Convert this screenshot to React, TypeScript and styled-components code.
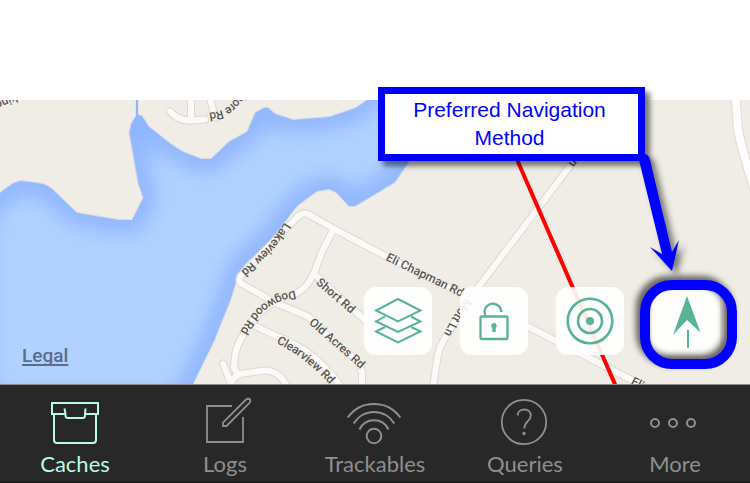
import React from "react";
import styled, { createGlobalStyle } from "styled-components";

const GREEN = "#56b494";
const BLUE = "#0000ff";

const GlobalStyle = createGlobalStyle`
  *, *::before, *::after { box-sizing: border-box; }
  body { margin: 0; background: #ffffff; }
`;

const Page = styled.main`
  display: flex;
  flex-direction: column;
  min-height: 100vh;
  padding-top: 100px;
  overflow: hidden;
  font-family: Lato, "Liberation Sans", sans-serif;
`;

const MapArea = styled.section`
  position: relative;
  display: flex;
  flex: 1;
  align-items: flex-end;
  justify-content: space-between;
  min-height: 285px;
  padding: 0 30px 29px 22px;
  border-bottom: 1px solid #8f8d89;
`;

const MapDrawing = styled.svg`
  position: absolute;
  inset: 0;
  width: 100%;
  height: 100%;
`;

const RoadLabel = styled.text`
  font-family: Roboto, sans-serif;
  font-size: 12px;
  font-weight: 500;
  fill: #5a5752;
  stroke: #f7f5f0;
  stroke-width: 1px;
  paint-order: stroke;
`;

const LegalLink = styled.a`
  position: relative;
  margin-bottom: -13px;
  color: #5d6d88;
  font-family: Roboto, sans-serif;
  font-size: 19px;
  font-weight: 500;
  line-height: 24px;
  text-decoration: underline;
  text-decoration-thickness: 2px;
  text-underline-offset: 2px;
  text-decoration-skip-ink: none;
`;

const MapTools = styled.div`
  position: relative;
  display: flex;
  gap: 28px;
`;

const ToolButton = styled.button`
  position: relative;
  width: 68px;
  height: 68px;
  padding: 0;
  border: 0;
  border-radius: 12px;
  background: rgba(255, 255, 255, 0.91);
  color: ${GREEN};
  cursor: pointer;

  svg { display: block; }
`;

const Highlight = styled.span`
  position: absolute;
  inset: -7px -17px -14px -12px;
  border: 10px solid ${BLUE};
  border-radius: 32px;
  filter: drop-shadow(-4px -4px 3px rgba(0, 0, 0, 0.6));
  pointer-events: none;
`;

const Callout = styled.p`
  position: absolute;
  top: -13px;
  right: 105px;
  width: 267px;
  margin: 0;
  padding: 2px 8px 2px 4px;
  border: 7px solid ${BLUE};
  background: #ffffff;
  box-shadow: 5px 5px 5px rgba(0, 0, 0, 0.5);
  color: ${BLUE};
  font-family: "Liberation Sans", Arial, sans-serif;
  font-size: 21px;
  line-height: 28px;
  text-align: center;
`;

const CalloutArrow = styled.svg`
  position: absolute;
  top: 50px;
  right: 60px;
  filter: drop-shadow(5px 4px 3px rgba(0, 0, 0, 0.5));
  pointer-events: none;
`;

const TabBar = styled.nav`
  display: grid;
  grid-template-columns: repeat(5, 1fr);
  height: 98px;
  background: #282828;
  border-bottom: 1px solid #111111;
`;

const Tab = styled.button<{ $active?: boolean }>`
  display: flex;
  flex-direction: column;
  align-items: center;
  gap: 3px;
  padding: 12px 0 0;
  border: 0;
  background: transparent;
  color: ${({ $active }) => ($active ? "#b9fbe3" : "#8f8f8f")};
  font-family: inherit;
  font-size: 22px;
  line-height: 28px;
  cursor: pointer;
`;

const WATER =
  "M-20 210 L0 193 L8 187 Q14 182 21 181 L43 184 Q48 186 52 189 L77 213 L118 220 L132 220 L143 198 L138 184 L129 133 L131 124 L136 116 L136 80 L138 80 L138 115 L142 116 L149 127 L172 145 L183 152 L201 159 L211 159 L229 142 L247 132 L255 113 L264 108 L268 108 L275 114 L293 120 L330 117 L356 108 L367 100 L380 80 L450 80 L410 161 L395 183 L355 207 L349 207 L336 193 L329 190 L317 192 L298 206 L293 212 L272 240 L245 265 L237 280 L231 300 L220 327 L215 340 L193 385 L180 410 L-20 410 Z";

const ROADS = [
  "M170 112 Q178 121 190 121 L205 120",
  "M191 90 L191 121",
  "M209 90 L211 103 L215 118",
  "M333 231 L322 252 L314 274 Q306 290 296 294 L280 299 Q260 310 252 322 Q237 342 235 356 L234 368 L238 376",
  "M314 274 L330 289 L360 316 L374 330",
  "M241 284 L275 303 L308 317 L340 348 Q361 360 362 374 L362 395",
  "M252 325 L275 336 Q315 350 340 386",
  "M223 364 L231 384 Q234 375 243 374 L265 371 Q275 371 282 379 L290 390",
  "M432 395 L437 361 Q438 348 449 332 L463 308 L500 259 L590 140",
  "M241 284 Q238 281 241 276 L294 221 Q302 211 309 215 L335 230 L390 259 L465 296 L528 327 L557 342 L650 390",
];

type LabelSpec = { id: string; d: string; text: string };

const LABELS: LabelSpec[] = [
  { id: "rocking", d: "M36 90 L-20 113", text: "Rocking" },
  { id: "shore", d: "M248 91 L234 107 Q226 117 200 118", text: "Shore Rd" },
  { id: "lakeview", d: "M288 225 L272 248 L234 284", text: "Lakeview Rd" },
  { id: "dogwood", d: "M296 295 Q267 300 253 320 Q243 332 238 348", text: "Dogwood Rd" },
  { id: "short", d: "M318 281 L338 298 L368 324", text: "Short Rd" },
  { id: "oldacres", d: "M311 321 L340 346 L376 378", text: "Old Acres Rd" },
  { id: "clearview", d: "M278 340 Q308 354 338 388", text: "Clearview Rd" },
  { id: "eli", d: "M387 257 L480 302", text: "Eli Chapman Rd" },
  { id: "mott", d: "M469 301 L454 323 L440 352", text: "Mott Ln" },
  { id: "mott-north", d: "M597 134 L560 181", text: "Mott Ln" },
  { id: "eli-east", d: "M632 381 L720 424", text: "Eli Chapman Rd" },
];

function StreetMap() {
  return (
    <MapDrawing viewBox="0 100 750 285" preserveAspectRatio="xMaxYMid slice" role="img" aria-label="Street map">
      <defs>
        <clipPath id="water-clip"><path d={WATER} /></clipPath>
        <filter id="shore-blur" x="-10%" y="-10%" width="120%" height="120%">
          <feGaussianBlur stdDeviation="11" />
        </filter>
        {LABELS.map(({ id, d }) => <path key={id} id={id} d={d} />)}
      </defs>
      <rect x="-1000" y="0" width="2750" height="600" fill="#efede5" />
      <path d={WATER} fill="#b2d1ff" />
      <g clipPath="url(#water-clip)">
        <path d={WATER} fill="none" stroke="#8ab2ff" strokeWidth="24" filter="url(#shore-blur)" />
      </g>
      <path d={WATER} fill="none" stroke="#d3dbe3" strokeWidth="1" />
      <path d="M137 95 L137 116" stroke="#8db5fc" strokeWidth="2" />
      <g fill="none" strokeLinecap="round" strokeLinejoin="round">
        {ROADS.map((d) => <path key={d} d={d} stroke="#dedad1" strokeWidth="8" />)}
        {ROADS.map((d) => <path key={d} d={d} stroke="#fbfaf8" strokeWidth="6" />)}
        <path d="M735 90 L738 130 Q743 155 754 188" stroke="#dedad1" strokeWidth="10" />
        <path d="M735 90 L738 130 Q743 155 754 188" stroke="#ffffff" strokeWidth="8" />
      </g>
      {LABELS.map(({ id, text }) => (
        <RoadLabel key={id} dy="4"><textPath href={`#${id}`}>{text}</textPath></RoadLabel>
      ))}
      <path d="M510 144 L619 394" stroke="#ff0000" strokeWidth="4" />
    </MapDrawing>
  );
}

const toolSvg = { width: 68, height: 68, viewBox: "0 0 68 68", fill: "none", stroke: "currentColor", strokeWidth: 2, "aria-hidden": true } as const;

function LayersIcon() {
  return (
    <svg {...toolSvg}>
      <path d="M34 12 L56.5 23.5 L34 34.5 L12 23.5 Z" />
      <path d="M21 29.5 L12 34.5 L34 45 L56.5 34.5 L47 29.5" />
      <path d="M21 40 L12 44.5 L34 55.5 L56.5 44.5 L47 40" />
    </svg>
  );
}

function UnlockIcon() {
  return (
    <svg {...toolSvg} strokeWidth={2.3}>
      <rect x="20.5" y="29.5" width="27" height="22.5" rx="1" />
      <path d="M25.5 29.5 Q24.5 26 24.5 23.5 A8.6 8.6 0 0 1 41.5 25" />
      <path d="M34 36 a2.8 2.8 0 0 1 1.7 5 V45 h-3.4 V41 A2.8 2.8 0 0 1 34 36 Z" fill="currentColor" stroke="none" />
    </svg>
  );
}

function TargetIcon() {
  return (
    <svg {...toolSvg} strokeWidth={2.6}>
      <circle cx="34" cy="34" r="22.3" />
      <circle cx="34" cy="34" r="12" />
      <circle cx="34" cy="34" r="4" fill="currentColor" stroke="none" />
    </svg>
  );
}

function NavigateIcon() {
  return (
    <svg {...toolSvg}>
      <path d="M35 9 L48.5 45.5 L35 33 L21 48 Z" fill="currentColor" stroke="none" />
      <path d="M36 43 V61" />
    </svg>
  );
}

const tabSvg = { width: 60, height: 50, viewBox: "0 0 60 50", fill: "none", stroke: "currentColor", strokeWidth: 2, "aria-hidden": true } as const;

function BoxIcon() {
  return (
    <svg {...tabSvg}>
      <path d="M20.5 17 H7 V6 H53 V17 H40" />
      <path d="M9 17 V43 Q9 46 12 46 H48 Q51 46 51 43 V17" />
      <path d="M19.5 11.5 L20.5 17 V18.5 Q20.5 21 23 21 H37.5 Q40 21 40 18.5 V17 L40.5 11.5" />
    </svg>
  );
}

function PencilIcon() {
  return (
    <svg {...tabSvg} strokeWidth={1.8}>
      <path d="M37 9 H12 V45 H48 V20" />
      <path d="M28 29 L28 25.5 L51 2.5 Q53.5 1 55 2.5 Q56 4 54.5 6 L31.5 29 Z" />
    </svg>
  );
}

function SignalIcon() {
  return (
    <svg {...tabSvg}>
      <circle cx="29" cy="39" r="7.3" />
      <path d="M14.5 32.5 A16 16 0 0 1 43.5 32.5" />
      <path d="M8.7 26.5 A23.6 23.6 0 0 1 49.3 26.5" />
      <path d="M2.7 20.5 A32.2 32.2 0 0 1 55.3 20.5" />
    </svg>
  );
}

function QuestionIcon() {
  return (
    <svg {...tabSvg} strokeWidth={1.8}>
      <circle cx="29" cy="25" r="22.2" />
      <path d="M22.7 18.5 C22.7 10.5 35.8 10.5 35.8 18.5 C35.8 24 29.3 24.5 29.3 31.5" />
      <circle cx="29" cy="36.5" r="1.7" fill="currentColor" stroke="none" />
    </svg>
  );
}

function MoreIcon() {
  return (
    <svg {...tabSvg}>
      <circle cx="10" cy="26" r="4" />
      <circle cx="28" cy="26" r="4" />
      <circle cx="46" cy="26" r="4" />
    </svg>
  );
}

const TABS = [
  { label: "Caches", Icon: BoxIcon, active: true },
  { label: "Logs", Icon: PencilIcon },
  { label: "Trackables", Icon: SignalIcon },
  { label: "Queries", Icon: QuestionIcon },
  { label: "More", Icon: MoreIcon },
];

export default function App() {
  return (
    <>
      <GlobalStyle />
      <Page>
        <MapArea>
          <StreetMap />
          <LegalLink href="#legal">Legal</LegalLink>
          <MapTools>
            <ToolButton type="button" aria-label="Map layers"><LayersIcon /></ToolButton>
            <ToolButton type="button" aria-label="Unlock map"><UnlockIcon /></ToolButton>
            <ToolButton type="button" aria-label="Center map"><TargetIcon /></ToolButton>
            <ToolButton type="button" aria-label="Navigate">
              <NavigateIcon />
              <Highlight />
            </ToolButton>
          </MapTools>
          <Callout>Preferred Navigation Method</Callout>
          <CalloutArrow width="60" height="130" viewBox="630 150 60 130" aria-hidden="true">
            <path d="M639 160 Q640 154 645 154 Q649 155 650 160 L672 252 L679 240 L672 271 L650 247 L662 254 Z" fill={BLUE} />
          </CalloutArrow>
        </MapArea>
        <TabBar>
          {TABS.map(({ label, Icon, active }) => (
            <Tab key={label} type="button" $active={active} aria-current={active ? "page" : undefined}>
              <Icon />
              {label}
            </Tab>
          ))}
        </TabBar>
      </Page>
    </>
  );
}
